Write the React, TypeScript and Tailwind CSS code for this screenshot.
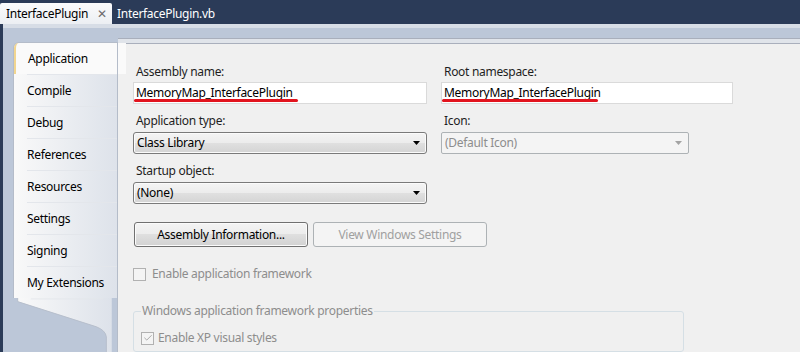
import { Check } from 'lucide-react';

type NavItem = { name: string; active?: boolean };

const navItems: NavItem[] = [
  { name: 'Application', active: true },
  { name: 'Compile' },
  { name: 'Debug' },
  { name: 'References' },
  { name: 'Resources' },
  { name: 'Settings' },
  { name: 'Signing' },
  { name: 'My Extensions' },
];

function Label({ children }: { children: string }) {
  return <div className="h-[16px] pl-[3px] leading-[16px] text-[#1e1e1e]">{children}</div>;
}

function TextBox({ value, underline }: { value: string; underline: number }) {
  return (
    <div className="relative mt-[2px] flex h-[22px] items-center border border-[#dadada] bg-white pl-[2px] text-black">
      {value}
      {/* red marker under the value */}
      <span
        className="absolute bottom-[1px] left-0 h-[3px] rounded-full bg-[#e2141e]"
        style={{ width: underline }}
      />
    </div>
  );
}

function Arrow({ disabled }: { disabled?: boolean }) {
  return (
    <svg width="7" height="4" viewBox="0 0 7 4" className="mr-[6px]">
      <path d="M0 0H7L3.5 4Z" fill={disabled ? '#a3a3a3' : '#000'} />
    </svg>
  );
}

function Combo({ value, width, disabled }: { value: string; width: number; disabled?: boolean }) {
  return (
    <div
      className={
        disabled
          ? 'mt-[3px] flex h-[22px] items-center justify-between rounded-[2px] border border-[#adb2b5] bg-[#f4f4f4] pl-[3px] text-[#8d8d8d]'
          : 'mt-[3px] flex h-[22px] items-center justify-between rounded-[3px] border border-[#7a7a7a] bg-[linear-gradient(#f4f4f4_0%,#ececec_50%,#e0e0e0_50%,#d4d4d4_100%)] pl-[3px] text-black shadow-[inset_0_0_0_1px_#fbfbfb]'
      }
      style={{ width }}
    >
      <span>{value}</span>
      <Arrow disabled={disabled} />
    </div>
  );
}

function CheckBox({ checked }: { checked?: boolean }) {
  return (
    <span className="flex h-[13px] w-[13px] items-center justify-center border border-[#b1b1b1] bg-[#f4f4f4]">
      {checked && <Check className="h-[10px] w-[10px] text-[#9a9a9a]" strokeWidth={2} />}
    </span>
  );
}

export default function App() {
  return (
    <div className="flex h-[352px] w-[800px] flex-col overflow-hidden font-['Segoe_UI','Noto_Sans',sans-serif] text-[12px] tracking-[-0.3px]">
      {/* Document tabs */}
      <div className="flex h-[24px] shrink-0 items-end bg-[#2b3b58]">
        <div className="flex h-[21px] w-[112px] items-center rounded-t-[2px] bg-[linear-gradient(#fbfbfc,#eceff3)] pl-[6px] text-black">
          <span className="flex-1">InterfacePlugin</span>
          <span className="mr-[5px] text-[12px] leading-none text-[#6d6d6d]">✕</span>
        </div>
        <div className="flex h-[21px] items-center pl-[5px] text-white">InterfacePlugin.vb</div>
      </div>

      <div className="flex min-h-0 flex-1">
        <div className="w-[3px] shrink-0 bg-[#2b3b58]" />
        <div className="flex min-w-0 flex-1 flex-col">
          <div className="h-[4px] shrink-0 bg-[#d7dde6]" />
          <div className="flex min-h-0 flex-1 bg-[#bcc7d8]">
            {/* Property pages */}
            <div className="relative z-10 flex w-[115px] shrink-0 flex-col pl-[10px] pt-[14px]">
              <div className="flex flex-col rounded-tl-[6px] border-l border-t border-[#b4bcc9] bg-[linear-gradient(to_right,#f9f9f9,#dde2ea)]">
                {navItems.map((item) =>
                  item.active ? (
                    <div
                      key={item.name}
                      className="-mr-[8px] flex h-[31px] items-center rounded-tl-[5px] border-l-2 border-[#f1d58f] bg-[#fafafa] pl-[12px] text-black"
                    >
                      {item.name}
                    </div>
                  ) : (
                    <div key={item.name} className="flex h-[32px] items-center pl-[13px] text-black">
                      <div className="flex h-full w-full items-center border-t border-[#e3e6eb]">{item.name}</div>
                    </div>
                  )
                )}
              </div>
              <svg width="105" height="60" viewBox="0 0 105 60" className="-ml-px">
                <defs>
                  <linearGradient id="pg" x1="0" x2="1" y1="0" y2="0">
                    <stop offset="0" stopColor="#f9f9f9" />
                    <stop offset="1" stopColor="#dde2ea" />
                  </linearGradient>
                </defs>
                <path d="M0.5 0V4L88 32Q98 36 99 43V60H105V0Z" fill="url(#pg)" />
                <path d="M0.5 0V4L88 32Q98 36 99 43V60" fill="none" stroke="#b4bcc9" />
                <path d="M15 1H96" stroke="#e3e6eb" />
              </svg>
              <div className="absolute bottom-0 right-0 top-[14px] w-px bg-[#b4bcc9]" />
            </div>

            {/* Page content */}
            <div className="flex min-w-0 flex-1 flex-col pt-[10px]">
              <div className="h-[6px] shrink-0 border-y border-[#a9afbc] bg-[#e0e4ea]" />
              <div className="flex flex-1 flex-col bg-[#f0f0f0] pl-[15px] pt-[20px] text-[#1e1e1e]">
                <div className="flex gap-[14px]">
                  <div className="flex w-[294px] flex-col">
                    <Label>Assembly name:</Label>
                    <TextBox value="MemoryMap_InterfacePlugin" underline={164} />
                    <div className="mt-[9px]">
                      <Label>Application type:</Label>
                    </div>
                    <Combo value="Class Library" width={294} />
                    <div className="mt-[9px]">
                      <Label>Startup object:</Label>
                    </div>
                    <Combo value="(None)" width={294} />
                  </div>
                  <div className="flex w-[292px] flex-col">
                    <Label>Root namespace:</Label>
                    <TextBox value="MemoryMap_InterfacePlugin" underline={156} />
                    <div className="mt-[9px]">
                      <Label>Icon:</Label>
                    </div>
                    <Combo value="(Default Icon)" width={248} disabled />
                  </div>
                </div>

                <div className="mt-[18px] flex gap-[5px] pl-px">
                  <button className="h-[25px] w-[174px] rounded-[3px] border border-[#707070] bg-[linear-gradient(#f4f4f4_0%,#ececec_50%,#dfdfdf_50%,#d2d2d2_100%)] text-black shadow-[inset_0_0_0_1px_#fbfbfb]">
                    Assembly Information...
                  </button>
                  <button className="h-[25px] w-[174px] rounded-[3px] border border-[#adb2b5] bg-[#f4f4f4] text-[#a0a0a0]">
                    View Windows Settings
                  </button>
                </div>

                <div className="mt-[18px] flex items-center gap-[6px] text-[#8d8d8d]">
                  <CheckBox />
                  <span>Enable application framework</span>
                </div>

                <fieldset className="mt-[19px] w-[551px] flex-1 rounded-[3px] border border-[#d5dfe5] pl-[7px] text-[#8d8d8d]">
                  <legend className="ml-0 px-[1px]">Windows application framework properties</legend>
                  <div className="mt-[9px] flex items-center gap-[4px]">
                    <CheckBox checked />
                    <span>Enable XP visual styles</span>
                  </div>
                </fieldset>
              </div>
            </div>
          </div>
        </div>
      </div>
    </div>
  );
}
